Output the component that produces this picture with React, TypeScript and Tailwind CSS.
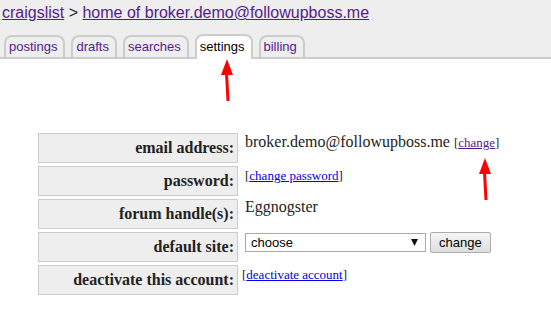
import { ChangeEvent, useState } from 'react';

const tabs = ['postings', 'drafts', 'searches', 'settings', 'billing'];

function Arrow({ className }: { className: string }) {
  return (
    <svg className={className} width="14" height="44" viewBox="0 0 14 44" aria-hidden="true">
      <polygon points="7,0 13,16 1,16" fill="#f00" />
      <path d="M6.5 14 L8 42" stroke="#f00" strokeWidth="3" fill="none" />
    </svg>
  );
}

function Label({ children }: { children: React.ReactNode }) {
  return (
    <div className="h-[30px] bg-[#eee] border border-[#ccc] flex items-center justify-end pr-[3px] font-bold text-[16px] leading-[18px]">
      {children}
    </div>
  );
}

export default function App() {
  const [site, setSite] = useState('choose');

  return (
    <div className="relative w-[551px] h-[334px] bg-white text-[#222] overflow-hidden font-['Liberation_Serif',serif]">
      <div className="bg-[#eee] border-b-2 border-[#ccc] font-['Liberation_Sans',Arial,sans-serif]">
        <div className="pt-[4px] pl-[2px] text-[16px] leading-[18px]">
          <a href="#" className="text-[#551a8b] underline">craigslist</a>
          <span> &gt; </span>
          <a href="#" className="text-[#551a8b] underline">home of broker.demo@followupboss.me</a>
        </div>
        <div className="flex items-end gap-[6px] ml-[4px] mt-[12px] -mb-[2px]">
          {tabs.map(t => {
            const active = t === 'settings';
            return (
              <a
                key={t}
                href="#"
                className={`block rounded-t-[8px] border-2 pl-[3px] pr-[6px] text-[13px] leading-[16px] ${
                  active
                    ? 'bg-white border-[#ccc] border-b-0 pt-[3px] pb-[4px] text-black'
                    : 'bg-[#eee] border-[#ccc] border-b-0 pt-[2px] pb-[2px] mb-[2px] text-[#551a8b]'
                }`}
              >
                {t}
              </a>
            );
          })}
        </div>
      </div>

      <div className="ml-[38px] mt-[74px] grid grid-cols-[200px_1fr] gap-x-[7px] gap-y-[3px]">
        <Label>email address:</Label>
        <div className="text-[16px] leading-[18px]">
          broker.demo@followupboss.me{' '}
          <span className="text-[13px]">
            [<a href="#" className="text-[#551a8b] underline">change</a>]
          </span>
        </div>

        <Label>password:</Label>
        <div className="text-[16px] leading-[18px]">
          <span className="text-[13px]">
            [<a href="#" className="text-[#00e] underline">change password</a>]
          </span>
        </div>

        <Label>forum handle(s):</Label>
        <div className="text-[16px] leading-[18px] -mt-[1px]">Eggnogster</div>

        <Label>default site:</Label>
        <div className="flex items-start gap-[4px] font-['Liberation_Sans',Arial,sans-serif] text-[13px]">
          <div className="relative mt-[1px]">
            <select
              value={site}
              onChange={(e: ChangeEvent<HTMLSelectElement>) => setSite(e.target.value)}
              className="appearance-none w-[181px] h-[19px] border border-[#a9a9a9] bg-white pl-[5px] text-[13px] leading-[17px] text-black"
            >
              <option value="choose">choose</option>
            </select>
            <svg className="absolute right-[8px] top-[6px] pointer-events-none" width="7" height="7" viewBox="0 0 7 7">
              <polygon points="0,0 7,0 3.5,7" fill="#111" />
            </svg>
          </div>
          <button className="h-[21px] px-[8px] border border-[#adadad] rounded-[2px] bg-gradient-to-b from-[#f6f6f6] to-[#dedede] text-[13px] leading-[17px] text-black">
            change
          </button>
        </div>

        <Label>deactivate this account:</Label>
        <div className="text-[16px] leading-[18px] -ml-[3px]">
          <span className="text-[13px]">
            [<a href="#" className="text-[#00e] underline">deactivate account</a>]
          </span>
        </div>
      </div>

      <Arrow className="absolute left-[220px] top-[59px]" />
      <Arrow className="absolute left-[478px] top-[158px]" />
    </div>
  );
}
